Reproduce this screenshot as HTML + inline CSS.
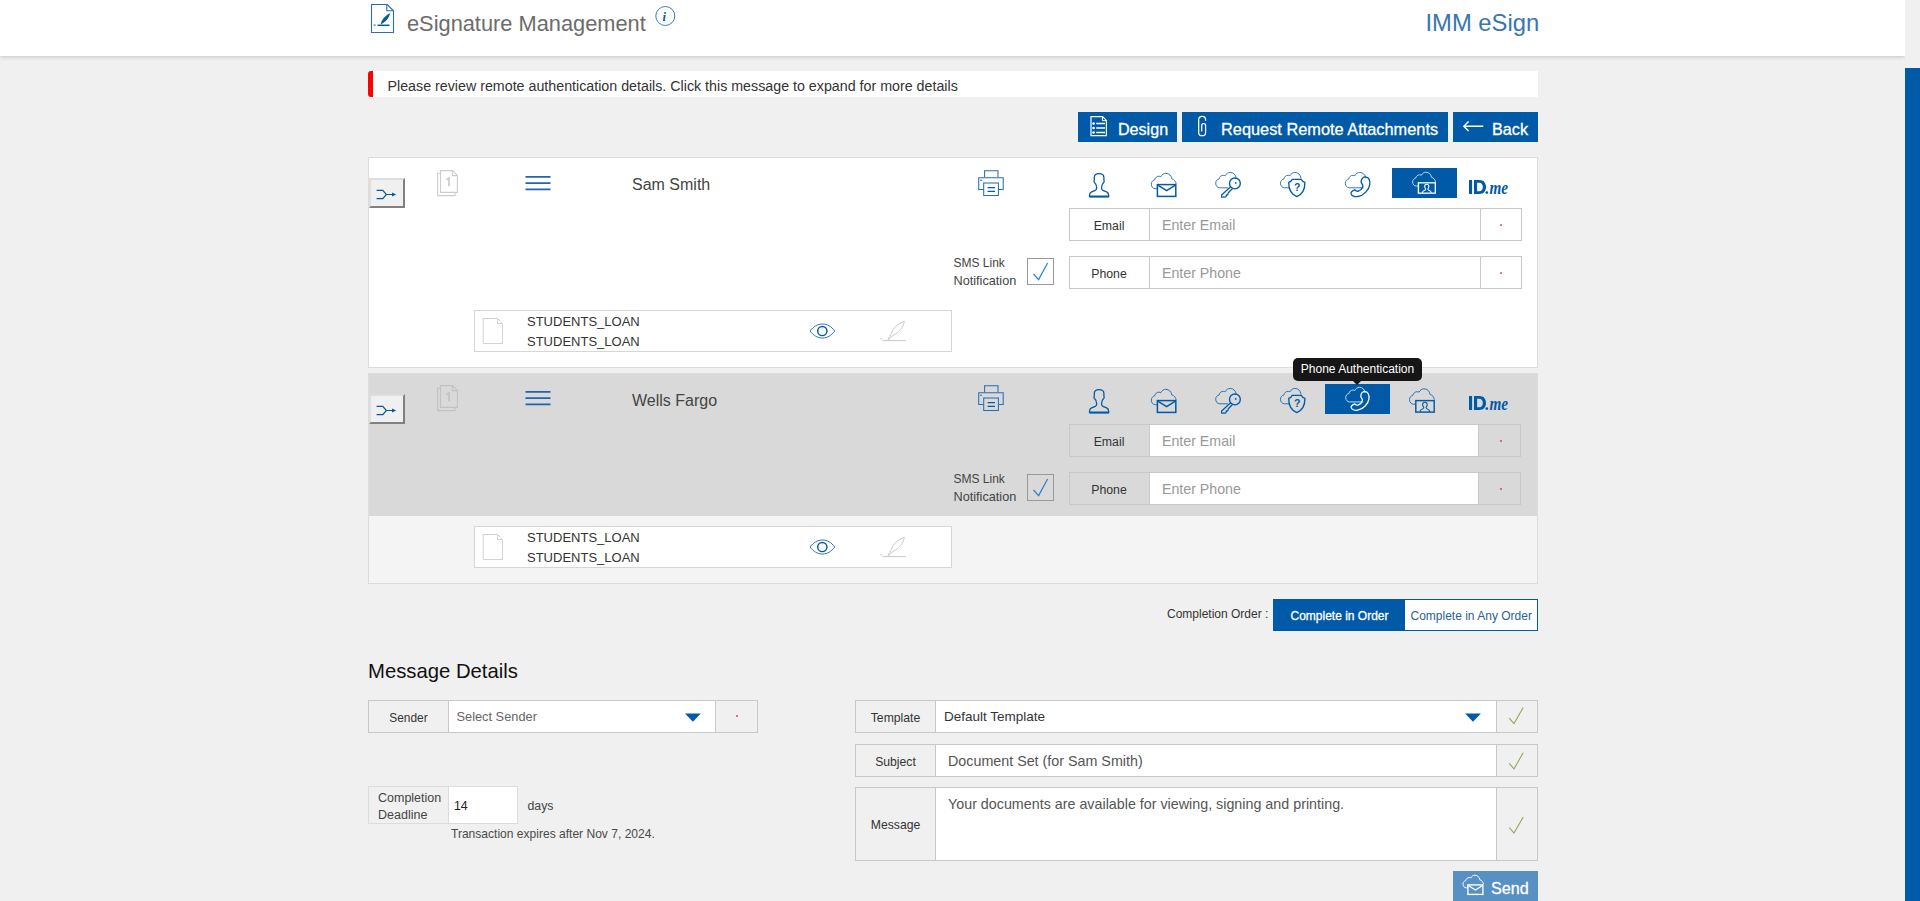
<!DOCTYPE html>
<html><head><meta charset="utf-8"><title>eSignature Management</title>
<style>
html,body{margin:0;padding:0;}
body{width:1920px;height:901px;overflow:hidden;background:#f0f0f0;position:relative;font-family:"Liberation Sans",sans-serif;}
.t{position:absolute;white-space:nowrap;font-family:"Liberation Sans",sans-serif;}
.r{position:absolute;box-sizing:border-box;}
svg.ov{position:absolute;left:0;top:0;width:1920px;height:901px;overflow:visible;}
</style></head><body>

<div class="r" style="left:0px;top:0px;width:1905px;height:56px;background:#fff;box-shadow:0 1px 4px rgba(0,0,0,0.18);"></div>
<div class="t" style="left:407px;top:13.00px;font-size:21.8px;line-height:21.8px;color:#6c6c6c;">eSignature Management</div>
<div class="t" style="left:1425.5px;top:11.00px;font-size:23.8px;line-height:23.8px;color:#3a74b2;">IMM eSign</div>
<div class="r" style="left:1905px;top:0px;width:15px;height:901px;background:#f0f0f0;"></div>
<div class="r" style="left:1905px;top:68px;width:15px;height:833px;background:#005aa7;"></div>
<div class="r" style="left:368px;top:71px;width:1170px;height:26px;background:#fff;"></div>
<div class="r" style="left:368px;top:71px;width:5px;height:26px;background:#f00;border-radius:3px 0 0 3px;"></div>
<div class="t" style="left:387.5px;top:79.00px;font-size:14.25px;line-height:14.25px;color:#333;">Please review remote authentication details. Click this message to expand for more details</div>
<div class="r" style="left:1078px;top:112px;width:99px;height:30px;background:#005aa7;"></div>
<div class="t" style="left:1118px;top:121.00px;font-size:16.1px;line-height:16.1px;color:#fff;-webkit-text-stroke:0.3px #fff;">Design</div>
<div class="r" style="left:1182px;top:112px;width:266px;height:30px;background:#005aa7;"></div>
<div class="t" style="left:1221px;top:121.00px;font-size:16.35px;line-height:16.35px;color:#fff;-webkit-text-stroke:0.3px #fff;">Request Remote Attachments</div>
<div class="r" style="left:1453px;top:112px;width:85px;height:30px;background:#005aa7;"></div>
<div class="t" style="left:1492px;top:121.00px;font-size:16.2px;line-height:16.2px;color:#fff;-webkit-text-stroke:0.3px #fff;">Back</div>
<div class="r" style="left:368px;top:157px;width:1170px;height:211px;background:#fff;border:1px solid #dcdcdc;"></div>
<div class="r" style="left:369px;top:158px;width:1168px;height:142px;background:#fff;"></div>
<div class="r" style="left:369px;top:178px;width:36px;height:30px;background:#f0f0f0;border-style:solid;border-width:2px;border-color:#dedede #808080 #808080 #dedede;"></div>
<div class="t" style="left:632px;top:177.00px;font-size:16px;line-height:16px;color:#444;">Sam Smith</div>
<div class="r" style="left:1392px;top:168px;width:65px;height:30px;background:#005aa7;"></div>
<div class="r" style="left:1069px;top:208px;width:453px;height:33px;background:#fff;border:1px solid #c8c8c8;"></div>
<div class="r" style="left:1149px;top:209px;width:332px;height:31px;background:#fff;border-left:1px solid #c8c8c8;border-right:1px solid #c8c8c8;"></div>
<div class="t" style="left:1069px;top:220.00px;font-size:12.3px;line-height:12.3px;color:#333;width:80px;text-align:center;">Email</div>
<div class="t" style="left:1162px;top:218.00px;font-size:14.2px;line-height:14.2px;color:#999;">Enter Email</div>
<div class="r" style="left:1499.5px;top:223.5px;width:2.6px;height:2.6px;background:#dd4455;border-radius:1.3px;"></div>
<div class="r" style="left:1069px;top:256px;width:453px;height:33px;background:#fff;border:1px solid #c8c8c8;"></div>
<div class="r" style="left:1149px;top:257px;width:332px;height:31px;background:#fff;border-left:1px solid #c8c8c8;border-right:1px solid #c8c8c8;"></div>
<div class="t" style="left:1069px;top:268.00px;font-size:12.3px;line-height:12.3px;color:#333;width:80px;text-align:center;">Phone</div>
<div class="t" style="left:1162px;top:266.00px;font-size:14.2px;line-height:14.2px;color:#999;">Enter Phone</div>
<div class="r" style="left:1499.5px;top:271.5px;width:2.6px;height:2.6px;background:#dd4455;border-radius:1.3px;"></div>
<div class="t" style="left:953.5px;top:257.00px;font-size:12px;line-height:12px;color:#444;">SMS Link</div>
<div class="t" style="left:953.5px;top:275.00px;font-size:12.7px;line-height:12.7px;color:#444;">Notification</div>
<div class="r" style="left:1027px;top:258px;width:27px;height:27px;border:1px solid #999;"></div>
<div class="r" style="left:474px;top:310px;width:478px;height:42px;background:#fff;border:1px solid #d6d6d6;"></div>
<div class="t" style="left:527px;top:315.00px;font-size:13px;line-height:13px;color:#333;">STUDENTS_LOAN</div>
<div class="t" style="left:527px;top:335.00px;font-size:13px;line-height:13px;color:#333;">STUDENTS_LOAN</div>
<div class="r" style="left:368px;top:373px;width:1170px;height:211px;background:#f4f4f4;border:1px solid #dcdcdc;"></div>
<div class="r" style="left:369px;top:374px;width:1168px;height:142px;background:#d9d9d9;"></div>
<div class="r" style="left:369px;top:394px;width:36px;height:30px;background:#f0f0f0;border-style:solid;border-width:2px;border-color:#dedede #808080 #808080 #dedede;"></div>
<div class="t" style="left:632px;top:393.00px;font-size:16px;line-height:16px;color:#444;">Wells Fargo</div>
<div class="r" style="left:1325px;top:384px;width:65px;height:30px;background:#005aa7;"></div>
<div class="r" style="left:1069px;top:424px;width:452px;height:33px;background:#d9d9d9;border:1px solid #c8c8c8;"></div>
<div class="r" style="left:1149px;top:425px;width:330px;height:31px;background:#fff;border-left:1px solid #c8c8c8;border-right:1px solid #c8c8c8;"></div>
<div class="t" style="left:1069px;top:436.00px;font-size:12.3px;line-height:12.3px;color:#333;width:80px;text-align:center;">Email</div>
<div class="t" style="left:1162px;top:434.00px;font-size:14.2px;line-height:14.2px;color:#999;">Enter Email</div>
<div class="r" style="left:1499.5px;top:439.5px;width:2.6px;height:2.6px;background:#dd4455;border-radius:1.3px;"></div>
<div class="r" style="left:1069px;top:472px;width:452px;height:33px;background:#d9d9d9;border:1px solid #c8c8c8;"></div>
<div class="r" style="left:1149px;top:473px;width:330px;height:31px;background:#fff;border-left:1px solid #c8c8c8;border-right:1px solid #c8c8c8;"></div>
<div class="t" style="left:1069px;top:484.00px;font-size:12.3px;line-height:12.3px;color:#333;width:80px;text-align:center;">Phone</div>
<div class="t" style="left:1162px;top:482.00px;font-size:14.2px;line-height:14.2px;color:#999;">Enter Phone</div>
<div class="r" style="left:1499.5px;top:487.5px;width:2.6px;height:2.6px;background:#dd4455;border-radius:1.3px;"></div>
<div class="t" style="left:953.5px;top:473.00px;font-size:12px;line-height:12px;color:#444;">SMS Link</div>
<div class="t" style="left:953.5px;top:491.00px;font-size:12.7px;line-height:12.7px;color:#444;">Notification</div>
<div class="r" style="left:1027px;top:474px;width:27px;height:27px;border:1px solid #999;"></div>
<div class="r" style="left:474px;top:526px;width:478px;height:42px;background:#fff;border:1px solid #d6d6d6;"></div>
<div class="t" style="left:527px;top:531.00px;font-size:13px;line-height:13px;color:#333;">STUDENTS_LOAN</div>
<div class="t" style="left:527px;top:551.00px;font-size:13px;line-height:13px;color:#333;">STUDENTS_LOAN</div>
<div class="t" style="left:1167px;top:608.00px;font-size:12px;line-height:12px;color:#333;">Completion Order :</div>
<div class="r" style="left:1273px;top:599px;width:265px;height:32px;background:#fff;border:1px solid #005aa7;"></div>
<div class="r" style="left:1273px;top:599px;width:132px;height:32px;background:#005aa7;"></div>
<div class="t" style="left:1290.5px;top:610.00px;font-size:12px;line-height:12px;color:#fff;-webkit-text-stroke:0.3px #fff;">Complete in Order</div>
<div class="t" style="left:1410.5px;top:610.00px;font-size:12px;line-height:12px;color:#2a5f9a;">Complete in Any Order</div>
<div class="t" style="left:368px;top:661.00px;font-size:20.3px;line-height:20.3px;color:#111;">Message Details</div>
<div class="r" style="left:368px;top:700px;width:390px;height:33px;background:#f0f0f0;border:1px solid #c8c8c8;"></div>
<div class="r" style="left:448px;top:701px;width:268px;height:31px;background:#fff;border-left:1px solid #c8c8c8;border-right:1px solid #c8c8c8;"></div>
<div class="t" style="left:368.5px;top:713.00px;font-size:11.9px;line-height:11.9px;color:#333;width:80px;text-align:center;">Sender</div>
<div class="t" style="left:456.5px;top:711.00px;font-size:12.8px;line-height:12.8px;color:#666;">Select Sender</div>
<div class="r" style="left:735.5px;top:714.5px;width:2.6px;height:2.6px;background:#dd4455;border-radius:1.3px;"></div>
<div class="r" style="left:368px;top:786px;width:150px;height:38px;background:#f0f0f0;border:1px solid #dcdcdc;"></div>
<div class="r" style="left:448px;top:787px;width:69px;height:36px;background:#fff;border-left:1px solid #dcdcdc;"></div>
<div class="t" style="left:378px;top:792.00px;font-size:12.5px;line-height:12.5px;color:#444;">Completion</div>
<div class="t" style="left:378px;top:809.00px;font-size:12.5px;line-height:12.5px;color:#444;">Deadline</div>
<div class="t" style="left:454px;top:800.00px;font-size:12.3px;line-height:12.3px;color:#222;">14</div>
<div class="t" style="left:527.5px;top:800.00px;font-size:12.3px;line-height:12.3px;color:#444;">days</div>
<div class="t" style="left:451px;top:828.00px;font-size:12.05px;line-height:12.05px;color:#4a4a4a;">Transaction expires after Nov 7, 2024.</div>
<div class="r" style="left:855px;top:700px;width:683px;height:33px;background:#f0f0f0;border:1px solid #c8c8c8;"></div>
<div class="r" style="left:935px;top:701px;width:562px;height:31px;background:#fff;border-left:1px solid #c8c8c8;border-right:1px solid #c8c8c8;"></div>
<div class="t" style="left:855.5px;top:712.00px;font-size:12.2px;line-height:12.2px;color:#333;width:80px;text-align:center;">Template</div>
<div class="t" style="left:944px;top:710.00px;font-size:13.5px;line-height:13.5px;color:#333;">Default Template</div>
<div class="r" style="left:855px;top:744px;width:683px;height:33px;background:#f0f0f0;border:1px solid #c8c8c8;"></div>
<div class="r" style="left:935px;top:745px;width:562px;height:31px;background:#fff;border-left:1px solid #c8c8c8;border-right:1px solid #c8c8c8;"></div>
<div class="t" style="left:855.5px;top:756.00px;font-size:12.2px;line-height:12.2px;color:#333;width:80px;text-align:center;">Subject</div>
<div class="t" style="left:948px;top:754.00px;font-size:14.3px;line-height:14.3px;color:#555;">Document Set (for Sam Smith)</div>
<div class="r" style="left:855px;top:787px;width:683px;height:74px;background:#f0f0f0;border:1px solid #c8c8c8;"></div>
<div class="r" style="left:935px;top:788px;width:562px;height:72px;background:#fff;border-left:1px solid #c8c8c8;border-right:1px solid #c8c8c8;"></div>
<div class="t" style="left:855.5px;top:819.00px;font-size:12.2px;line-height:12.2px;color:#333;width:80px;text-align:center;">Message</div>
<div class="t" style="left:948px;top:797.00px;font-size:14.3px;line-height:14.3px;color:#555;">Your documents are available for viewing, signing and printing.</div>
<div class="r" style="left:1453px;top:871px;width:85px;height:40px;background:#5791c3;"></div>
<div class="t" style="left:1491px;top:880.00px;font-size:16.1px;line-height:16.1px;color:#fff;-webkit-text-stroke:0.3px #fff;">Send</div>
<svg class="ov" width="1920" height="901" viewBox="0 0 1920 901">
<g fill="none" stroke="#2a6db0" stroke-width="1.1"><path d="M371.5,4.5 H387.2 L393.5,10.8 V32.5 H371.5 Z"/><path d="M386.8,4.5 V10.8 H393.5"/></g><path d="M377.5,25.3 H389.5" stroke="#005aa7" stroke-width="1.5"/><path d="M380.6,24.2 C381.8,19.6 385.2,15.2 390.2,13.2 C389,18.2 385.2,22.4 380.6,24.2 Z" fill="#005aa7"/><path d="M373.8,24.4 l1.5,1.5 M375.3,24.4 l-1.5,1.5" stroke="#005aa7" stroke-width="0.8"/><circle cx="665.3" cy="16" r="9.5" fill="none" stroke="#2a6db0" stroke-width="0.9"/><text x="662.4" y="20.8" font-family="Liberation Serif" font-style="italic" font-weight="bold" font-size="12.5" fill="#005aa7">i</text><g fill="none" stroke="#fff" stroke-width="1.2"><path d="M1091,116.6 H1102.6 L1106.4,120.4 V135.6 H1091 Z"/><path d="M1102.4,116.6 V120.6 H1106.4" stroke-width="1"/><path d="M1096.2,123.5 H1105 M1096.2,128 H1105 M1096.2,132.5 H1105" stroke-width="1.5"/></g><g fill="#fff"><circle cx="1093.6" cy="123.5" r="1.35"/><circle cx="1093.6" cy="128" r="1.35"/><circle cx="1093.6" cy="132.5" r="1.35"/></g><path d="M1205.6,120.7 V119.8 C1205.6,117.6 1204.2,116.4 1202.1,116.4 C1200,116.4 1198.7,117.6 1198.7,119.8 V132.4 C1198.7,134.6 1200,135.7 1202.1,135.7 C1204.2,135.7 1205.6,134.6 1205.6,132.4 V125.4 C1205.6,124.2 1204.8,123.6 1203.6,123.6 C1202.4,123.6 1201.7,124.2 1201.7,125.4 V131.6" fill="none" stroke="#fff" stroke-width="1.25"/><path d="M1463.6,126.2 H1483.3 M1468.6,121.4 L1463.8,126.2 L1468.6,131" fill="none" stroke="#fff" stroke-width="1.4"/><g transform="translate(0,0)"><path d="M376.6,190.4 H382.8 L386.4,194.5 L382.8,198.6 H376.6 M386.4,194.5 H393" fill="none" stroke="#005aa7" stroke-width="1.2"/><path d="M392,192.4 L396.2,194.5 L392,196.6 Z" fill="#005aa7"/><g transform="translate(0,0)"><g fill="none" stroke="#cdcdcd" stroke-width="1.1"><path d="M440.3,173.3 H437.6 V195.6 H455 V192.6"/><path d="M440.5,170.6 H452.6 L457.4,175.4 V192.4 H440.5 Z"/><path d="M452.4,170.6 V175.6 H457.4"/></g><path d="M446.6,179.8 L449,178.2 V186.2" fill="none" stroke="#cdcdcd" stroke-width="1.7"/><path d="M525.5,176.8 H550.5 M525.5,183.1 H550.5 M525.5,189.3 H550.5" stroke="#1f66ad" stroke-width="1.7"/><g fill="none" stroke="#2a6db0" stroke-width="1.05"><path d="M984.6,177.3 V170.7 H998 V177.3"/><path d="M983.6,189.5 H978.7 V177.7 H1003.2 V189.5 H998.4"/><rect x="983.7" y="183" width="14.7" height="12.5"/></g><path d="M987.6,187.6 H995 M987.6,191.3 H995" stroke="#005aa7" stroke-width="1.3"/><circle cx="981" cy="180.2" r="0.8" fill="#005aa7"/></g><path d="M1099.1,173.7 C1095.9,173.7 1094.3,174.9 1094.3,177.6 V180 C1093.8,180.8 1093.9,182 1094.7,182.8 C1095.9,183.9 1096.6,185.5 1096.6,187.3 V188.6 C1096.6,189.4 1096.2,189.9 1095.3,190.3 L1091.6,191.9 C1090,192.6 1089.5,193.9 1089.5,195.5 V196.5 H1108.7 V195.5 C1108.7,193.9 1108.2,192.6 1106.6,191.9 L1102.9,190.3 C1102,189.9 1101.6,189.4 1101.6,188.6 V187.3 C1101.6,185.5 1102.3,183.9 1103.5,182.8 C1104.3,182 1104.4,180.8 1103.9,180 V177.6 C1103.9,174.9 1102.3,173.7 1099.1,173.7 Z" fill="none" stroke="#005aa7" stroke-width="1.3" stroke-linejoin="round"/><path d="M1089.5,196.6 H1108.7" stroke="#005aa7" stroke-width="1.8"/><path d="M5.8,15.4 H4 C1.6,15.4 0,13.3 0,10.8 C0,8.6 1.5,6.9 3.4,6.6 C3.8,4.3 5.6,2.9 7.7,2.9 C8.4,2.9 9,3.1 9.5,3.4 C10.6,1.3 12.3,0 14.5,0 C17.6,0 20.2,2.4 20.5,5.6 C22.9,6.2 24.6,8.3 24.8,10.4" transform="translate(1151.3,173.3) scale(1.0)" fill="none" stroke="#005aa7" stroke-width="0.80" stroke-linejoin="round" stroke-linecap="round"/><rect x="1157.4" y="184.6" width="18.4" height="11.8" fill="none" stroke="#005aa7" stroke-width="1.5"/><path d="M1157.8,185.1 L1166.6,190.6 L1175.4,185.1" fill="none" stroke="#005aa7" stroke-width="1.4"/><path d="M12.0,15.4 H4 C1.6,15.4 0,13.3 0,10.8 C0,8.6 1.5,6.9 3.4,6.6 C3.8,4.3 5.6,2.9 7.7,2.9 C8.4,2.9 9,3.1 9.5,3.4 C10.6,1.3 12.3,0 14.5,0 C17.6,0 20.2,2.4 20.5,5.6 " transform="translate(1215.7,172.4) scale(1.0)" fill="none" stroke="#005aa7" stroke-width="0.80" stroke-linejoin="round" stroke-linecap="round"/><circle cx="1234.9" cy="183.4" r="5.4" fill="none" stroke="#005aa7" stroke-width="1.35"/><circle cx="1235.7" cy="182.9" r="0.9" fill="#005aa7"/><path d="M1230.7,186.7 L1221.6,195 V197.1 H1225.3 L1226.3,196.1 V194.8 H1227.8 L1228.3,192.7 L1232.3,188.7" fill="none" stroke="#005aa7" stroke-width="1.25" stroke-linejoin="round"/><path d="M8.3,15.4 H4 C1.6,15.4 0,13.3 0,10.8 C0,8.6 1.5,6.9 3.4,6.6 C3.8,4.3 5.6,2.9 7.7,2.9 C8.4,2.9 9,3.1 9.5,3.4 C10.6,1.3 12.3,0 14.5,0 C17.6,0 20.2,2.4 20.5,5.6 " transform="translate(1280.5,172.4) scale(1.0)" fill="none" stroke="#005aa7" stroke-width="0.80" stroke-linejoin="round" stroke-linecap="round"/><path d="M1292.3,179.3 H1301.2 C1301.9,180.8 1303.2,181.9 1304.9,182.4 C1305,189.2 1302.2,194.2 1296.8,196.6 C1291.4,194.2 1288.6,189.2 1288.7,182.4 C1290.4,181.9 1291.7,180.8 1292.3,179.3 Z" fill="none" stroke="#005aa7" stroke-width="1.35" stroke-linejoin="round"/><text x="1293.9" y="191" font-family="Liberation Sans" font-weight="bold" font-size="10.5" fill="#005aa7">?</text><path d="M18.0,15.4 H4 C1.6,15.4 0,13.3 0,10.8 C0,8.6 1.5,6.9 3.4,6.6 C3.8,4.3 5.6,2.9 7.7,2.9 C8.4,2.9 9,3.1 9.5,3.4 C10.6,1.3 12.3,0 14.5,0 C17.6,0 20.2,2.4 20.5,5.6 " transform="translate(1345.3,172.4) scale(1.0)" fill="none" stroke="#005aa7" stroke-width="0.80" stroke-linejoin="round" stroke-linecap="round"/><path d="M1365.4,176.8 C1368.6,176.9 1370.4,180.4 1369.8,184.5 C1369,189.8 1363.8,195.6 1358,196.5 C1354.6,197 1351.3,195.7 1351,193.7 C1350.8,192 1352.6,190.6 1354.6,189.8 C1355.8,190.9 1357.1,191.6 1358.6,191 C1360.4,190.2 1362.4,188.2 1362.8,186.4 C1363.2,185 1362.2,183.9 1361.6,183.2 C1360.4,181.6 1361.8,177.9 1363.8,177.1 Z" fill="none" stroke="#005aa7" stroke-width="1.35" stroke-linejoin="round"/><g transform="translate(1412.6,172.2) scale(0.92,0.9) translate(-1409.5,-172.8)"><path d="M5.6,15.4 H4 C1.6,15.4 0,13.3 0,10.8 C0,8.6 1.5,6.9 3.4,6.6 C3.8,4.3 5.6,2.9 7.7,2.9 C8.4,2.9 9,3.1 9.5,3.4 C10.6,1.3 12.3,0 14.5,0 C17.6,0 20.2,2.4 20.5,5.6 C22.9,6.2 24.6,8.3 24.8,10.4" transform="translate(1409.5,172.8) scale(1.0)" fill="none" stroke="#fff" stroke-width="0.80" stroke-linejoin="round" stroke-linecap="round"/><rect x="1415.8" y="184.6" width="18.4" height="11.5" fill="none" stroke="#fff" stroke-width="1.45"/><path d="M1424.9,186.2 C1423.4,186.2 1422.6,187.3 1422.6,188.7 C1422.6,189.8 1423.1,190.6 1423.7,191.2 C1423.9,191.8 1423.7,192.2 1423.1,192.6 L1421,193.9 C1420.4,194.3 1420.1,195 1420.1,196 M1429.7,196 C1429.7,195 1429.4,194.3 1428.8,193.9 L1426.7,192.6 C1426.1,192.2 1425.9,191.8 1426.1,191.2 C1426.7,190.6 1427.2,189.8 1427.2,188.7 C1427.2,187.3 1426.4,186.2 1424.9,186.2" fill="none" stroke="#fff" stroke-width="1.1"/></g><rect x="1469" y="180" width="3.1" height="14" fill="#005aa7"/><path fill-rule="evenodd" d="M1474,180 H1479.4 C1483.6,180 1486,182.8 1486,187 C1486,191.2 1483.6,194 1479.4,194 H1474 Z M1477.1,182.8 V191.2 H1479.2 C1481.6,191.2 1482.8,189.6 1482.8,187 C1482.8,184.4 1481.6,182.8 1479.2,182.8 Z" fill="#005aa7"/><circle cx="1486.8" cy="192.6" r="1.35" fill="#005aa7"/><text x="1489.4" y="193.9" font-family="Liberation Serif" font-style="italic" font-weight="bold" font-size="18" fill="#005aa7" textLength="18.6" lengthAdjust="spacingAndGlyphs">me</text><path d="M1033.5,274 L1038.6,279.6 L1047.6,263" fill="none" stroke="#2f7fc4" stroke-width="1.2"/><path d="M483.2,318.5 H497.5 L502.5,323.5 V343.5 H483.2 Z M497.5,318.5 V323.5 H502.5" fill="none" stroke="#d3d3d3" stroke-width="1"/><path d="M810,331 C813.5,326.5 817.5,324 822.4,324 C827.3,324 831.3,326.5 834.8,331 C831.3,335.5 827.3,338 822.4,338 C817.5,338 813.5,335.5 810,331 Z" fill="none" stroke="#2a6db0" stroke-width="0.95"/><circle cx="822.3" cy="331" r="4.6" fill="none" stroke="#005aa7" stroke-width="1.45"/><g fill="none" stroke="#c8c8c8" stroke-width="1"><path d="M882.5,340.6 H906"/><path d="M888,340 C889,337 890.5,335.5 891.3,333.5 C893,328 898,323.5 904.3,321.4 C903.5,327 899.5,332 894,335 C892.5,336 890.5,337.5 888,340"/><path d="M880.6,337.8 l1.6,1.8 M882.2,337.8 l-1.6,1.8" stroke-width="0.8"/></g></g><g transform="translate(0,216)"><path d="M376.6,190.4 H382.8 L386.4,194.5 L382.8,198.6 H376.6 M386.4,194.5 H393" fill="none" stroke="#005aa7" stroke-width="1.2"/><path d="M392,192.4 L396.2,194.5 L392,196.6 Z" fill="#005aa7"/><g transform="translate(0,-1)"><g fill="none" stroke="#c2c2c2" stroke-width="1.1"><path d="M440.3,173.3 H437.6 V195.6 H455 V192.6"/><path d="M440.5,170.6 H452.6 L457.4,175.4 V192.4 H440.5 Z"/><path d="M452.4,170.6 V175.6 H457.4"/></g><path d="M446.6,179.8 L449,178.2 V186.2" fill="none" stroke="#c2c2c2" stroke-width="1.7"/><path d="M525.5,176.8 H550.5 M525.5,183.1 H550.5 M525.5,189.3 H550.5" stroke="#1f66ad" stroke-width="1.7"/><g fill="none" stroke="#2a6db0" stroke-width="1.05"><path d="M984.6,177.3 V170.7 H998 V177.3"/><path d="M983.6,189.5 H978.7 V177.7 H1003.2 V189.5 H998.4"/><rect x="983.7" y="183" width="14.7" height="12.5"/></g><path d="M987.6,187.6 H995 M987.6,191.3 H995" stroke="#005aa7" stroke-width="1.3"/><circle cx="981" cy="180.2" r="0.8" fill="#005aa7"/></g><path d="M1099.1,173.7 C1095.9,173.7 1094.3,174.9 1094.3,177.6 V180 C1093.8,180.8 1093.9,182 1094.7,182.8 C1095.9,183.9 1096.6,185.5 1096.6,187.3 V188.6 C1096.6,189.4 1096.2,189.9 1095.3,190.3 L1091.6,191.9 C1090,192.6 1089.5,193.9 1089.5,195.5 V196.5 H1108.7 V195.5 C1108.7,193.9 1108.2,192.6 1106.6,191.9 L1102.9,190.3 C1102,189.9 1101.6,189.4 1101.6,188.6 V187.3 C1101.6,185.5 1102.3,183.9 1103.5,182.8 C1104.3,182 1104.4,180.8 1103.9,180 V177.6 C1103.9,174.9 1102.3,173.7 1099.1,173.7 Z" fill="none" stroke="#005aa7" stroke-width="1.3" stroke-linejoin="round"/><path d="M1089.5,196.6 H1108.7" stroke="#005aa7" stroke-width="1.8"/><path d="M5.8,15.4 H4 C1.6,15.4 0,13.3 0,10.8 C0,8.6 1.5,6.9 3.4,6.6 C3.8,4.3 5.6,2.9 7.7,2.9 C8.4,2.9 9,3.1 9.5,3.4 C10.6,1.3 12.3,0 14.5,0 C17.6,0 20.2,2.4 20.5,5.6 C22.9,6.2 24.6,8.3 24.8,10.4" transform="translate(1151.3,173.3) scale(1.0)" fill="none" stroke="#005aa7" stroke-width="0.80" stroke-linejoin="round" stroke-linecap="round"/><rect x="1157.4" y="184.6" width="18.4" height="11.8" fill="none" stroke="#005aa7" stroke-width="1.5"/><path d="M1157.8,185.1 L1166.6,190.6 L1175.4,185.1" fill="none" stroke="#005aa7" stroke-width="1.4"/><path d="M12.0,15.4 H4 C1.6,15.4 0,13.3 0,10.8 C0,8.6 1.5,6.9 3.4,6.6 C3.8,4.3 5.6,2.9 7.7,2.9 C8.4,2.9 9,3.1 9.5,3.4 C10.6,1.3 12.3,0 14.5,0 C17.6,0 20.2,2.4 20.5,5.6 " transform="translate(1215.7,172.4) scale(1.0)" fill="none" stroke="#005aa7" stroke-width="0.80" stroke-linejoin="round" stroke-linecap="round"/><circle cx="1234.9" cy="183.4" r="5.4" fill="none" stroke="#005aa7" stroke-width="1.35"/><circle cx="1235.7" cy="182.9" r="0.9" fill="#005aa7"/><path d="M1230.7,186.7 L1221.6,195 V197.1 H1225.3 L1226.3,196.1 V194.8 H1227.8 L1228.3,192.7 L1232.3,188.7" fill="none" stroke="#005aa7" stroke-width="1.25" stroke-linejoin="round"/><path d="M8.3,15.4 H4 C1.6,15.4 0,13.3 0,10.8 C0,8.6 1.5,6.9 3.4,6.6 C3.8,4.3 5.6,2.9 7.7,2.9 C8.4,2.9 9,3.1 9.5,3.4 C10.6,1.3 12.3,0 14.5,0 C17.6,0 20.2,2.4 20.5,5.6 " transform="translate(1280.5,172.4) scale(1.0)" fill="none" stroke="#005aa7" stroke-width="0.80" stroke-linejoin="round" stroke-linecap="round"/><path d="M1292.3,179.3 H1301.2 C1301.9,180.8 1303.2,181.9 1304.9,182.4 C1305,189.2 1302.2,194.2 1296.8,196.6 C1291.4,194.2 1288.6,189.2 1288.7,182.4 C1290.4,181.9 1291.7,180.8 1292.3,179.3 Z" fill="none" stroke="#005aa7" stroke-width="1.35" stroke-linejoin="round"/><text x="1293.9" y="191" font-family="Liberation Sans" font-weight="bold" font-size="10.5" fill="#005aa7">?</text><g transform="translate(1345.7,171.1) scale(0.95) translate(-1345.3,-172.2)"><path d="M18.0,15.4 H4 C1.6,15.4 0,13.3 0,10.8 C0,8.6 1.5,6.9 3.4,6.6 C3.8,4.3 5.6,2.9 7.7,2.9 C8.4,2.9 9,3.1 9.5,3.4 C10.6,1.3 12.3,0 14.5,0 C17.6,0 20.2,2.4 20.5,5.6 " transform="translate(1345.3,172.4) scale(1.0)" fill="none" stroke="#fff" stroke-width="0.80" stroke-linejoin="round" stroke-linecap="round"/><path d="M1365.4,176.8 C1368.6,176.9 1370.4,180.4 1369.8,184.5 C1369,189.8 1363.8,195.6 1358,196.5 C1354.6,197 1351.3,195.7 1351,193.7 C1350.8,192 1352.6,190.6 1354.6,189.8 C1355.8,190.9 1357.1,191.6 1358.6,191 C1360.4,190.2 1362.4,188.2 1362.8,186.4 C1363.2,185 1362.2,183.9 1361.6,183.2 C1360.4,181.6 1361.8,177.9 1363.8,177.1 Z" fill="none" stroke="#fff" stroke-width="1.35" stroke-linejoin="round"/></g><path d="M5.6,15.4 H4 C1.6,15.4 0,13.3 0,10.8 C0,8.6 1.5,6.9 3.4,6.6 C3.8,4.3 5.6,2.9 7.7,2.9 C8.4,2.9 9,3.1 9.5,3.4 C10.6,1.3 12.3,0 14.5,0 C17.6,0 20.2,2.4 20.5,5.6 C22.9,6.2 24.6,8.3 24.8,10.4" transform="translate(1409.5,172.8) scale(1.0)" fill="none" stroke="#005aa7" stroke-width="0.80" stroke-linejoin="round" stroke-linecap="round"/><rect x="1415.8" y="184.6" width="18.4" height="11.5" fill="none" stroke="#005aa7" stroke-width="1.45"/><path d="M1424.9,186.2 C1423.4,186.2 1422.6,187.3 1422.6,188.7 C1422.6,189.8 1423.1,190.6 1423.7,191.2 C1423.9,191.8 1423.7,192.2 1423.1,192.6 L1421,193.9 C1420.4,194.3 1420.1,195 1420.1,196 M1429.7,196 C1429.7,195 1429.4,194.3 1428.8,193.9 L1426.7,192.6 C1426.1,192.2 1425.9,191.8 1426.1,191.2 C1426.7,190.6 1427.2,189.8 1427.2,188.7 C1427.2,187.3 1426.4,186.2 1424.9,186.2" fill="none" stroke="#005aa7" stroke-width="1.1"/><rect x="1469" y="180" width="3.1" height="14" fill="#005aa7"/><path fill-rule="evenodd" d="M1474,180 H1479.4 C1483.6,180 1486,182.8 1486,187 C1486,191.2 1483.6,194 1479.4,194 H1474 Z M1477.1,182.8 V191.2 H1479.2 C1481.6,191.2 1482.8,189.6 1482.8,187 C1482.8,184.4 1481.6,182.8 1479.2,182.8 Z" fill="#005aa7"/><circle cx="1486.8" cy="192.6" r="1.35" fill="#005aa7"/><text x="1489.4" y="193.9" font-family="Liberation Serif" font-style="italic" font-weight="bold" font-size="18" fill="#005aa7" textLength="18.6" lengthAdjust="spacingAndGlyphs">me</text><path d="M1033.5,274 L1038.6,279.6 L1047.6,263" fill="none" stroke="#2f7fc4" stroke-width="1.2"/><path d="M483.2,318.5 H497.5 L502.5,323.5 V343.5 H483.2 Z M497.5,318.5 V323.5 H502.5" fill="none" stroke="#d3d3d3" stroke-width="1"/><path d="M810,331 C813.5,326.5 817.5,324 822.4,324 C827.3,324 831.3,326.5 834.8,331 C831.3,335.5 827.3,338 822.4,338 C817.5,338 813.5,335.5 810,331 Z" fill="none" stroke="#2a6db0" stroke-width="0.95"/><circle cx="822.3" cy="331" r="4.6" fill="none" stroke="#005aa7" stroke-width="1.45"/><g fill="none" stroke="#c8c8c8" stroke-width="1"><path d="M882.5,340.6 H906"/><path d="M888,340 C889,337 890.5,335.5 891.3,333.5 C893,328 898,323.5 904.3,321.4 C903.5,327 899.5,332 894,335 C892.5,336 890.5,337.5 888,340"/><path d="M880.6,337.8 l1.6,1.8 M882.2,337.8 l-1.6,1.8" stroke-width="0.8"/></g></g><path d="M685,713.4 H700.8 L692.9,721.8 Z" fill="#005aa7"/><path d="M1465.1,713.4 H1480.9 L1473,721.8 Z" fill="#005aa7"/><path d="M1509.2,718.1 L1514,723.6 L1523.2,707.6" fill="none" stroke="#8fa85a" stroke-width="1.1"/><path d="M1509.2,763.3 L1514,768.8 L1523.2,752.8" fill="none" stroke="#8fa85a" stroke-width="1.1"/><path d="M1509.2,827.5 L1514,833.0 L1523.2,817.0" fill="none" stroke="#8fa85a" stroke-width="1.1"/><path d="M5.6,15.4 H4 C1.6,15.4 0,13.3 0,10.8 C0,8.6 1.5,6.9 3.4,6.6 C3.8,4.3 5.6,2.9 7.7,2.9 C8.4,2.9 9,3.1 9.5,3.4 C10.6,1.3 12.3,0 14.5,0 C17.6,0 20.2,2.4 20.5,5.6 C22.9,6.2 24.6,8.3 24.8,10.4" transform="translate(1463,875.2) scale(0.82)" fill="none" stroke="#fff" stroke-width="1.16" stroke-linejoin="round" stroke-linecap="round"/><rect x="1467.9" y="884.9" width="15" height="9.5" fill="none" stroke="#fff" stroke-width="1.35"/><path d="M1468.3,885.4 L1475.4,890 L1482.5,885.4" fill="none" stroke="#fff" stroke-width="1.25"/>
</svg>
<div class="r" style="left:1293px;top:358px;width:129px;height:23px;background:#161616;border-radius:5px;"></div>
<div class="r" style="left:1352px;top:380px;width:0;height:0;border-left:5px solid transparent;border-right:5px solid transparent;border-top:5px solid #161616;"></div>
<div class="t" style="left:1293px;top:363.00px;font-size:12px;line-height:12px;color:#fff;width:129px;text-align:center;">Phone Authentication</div>
</body></html>
